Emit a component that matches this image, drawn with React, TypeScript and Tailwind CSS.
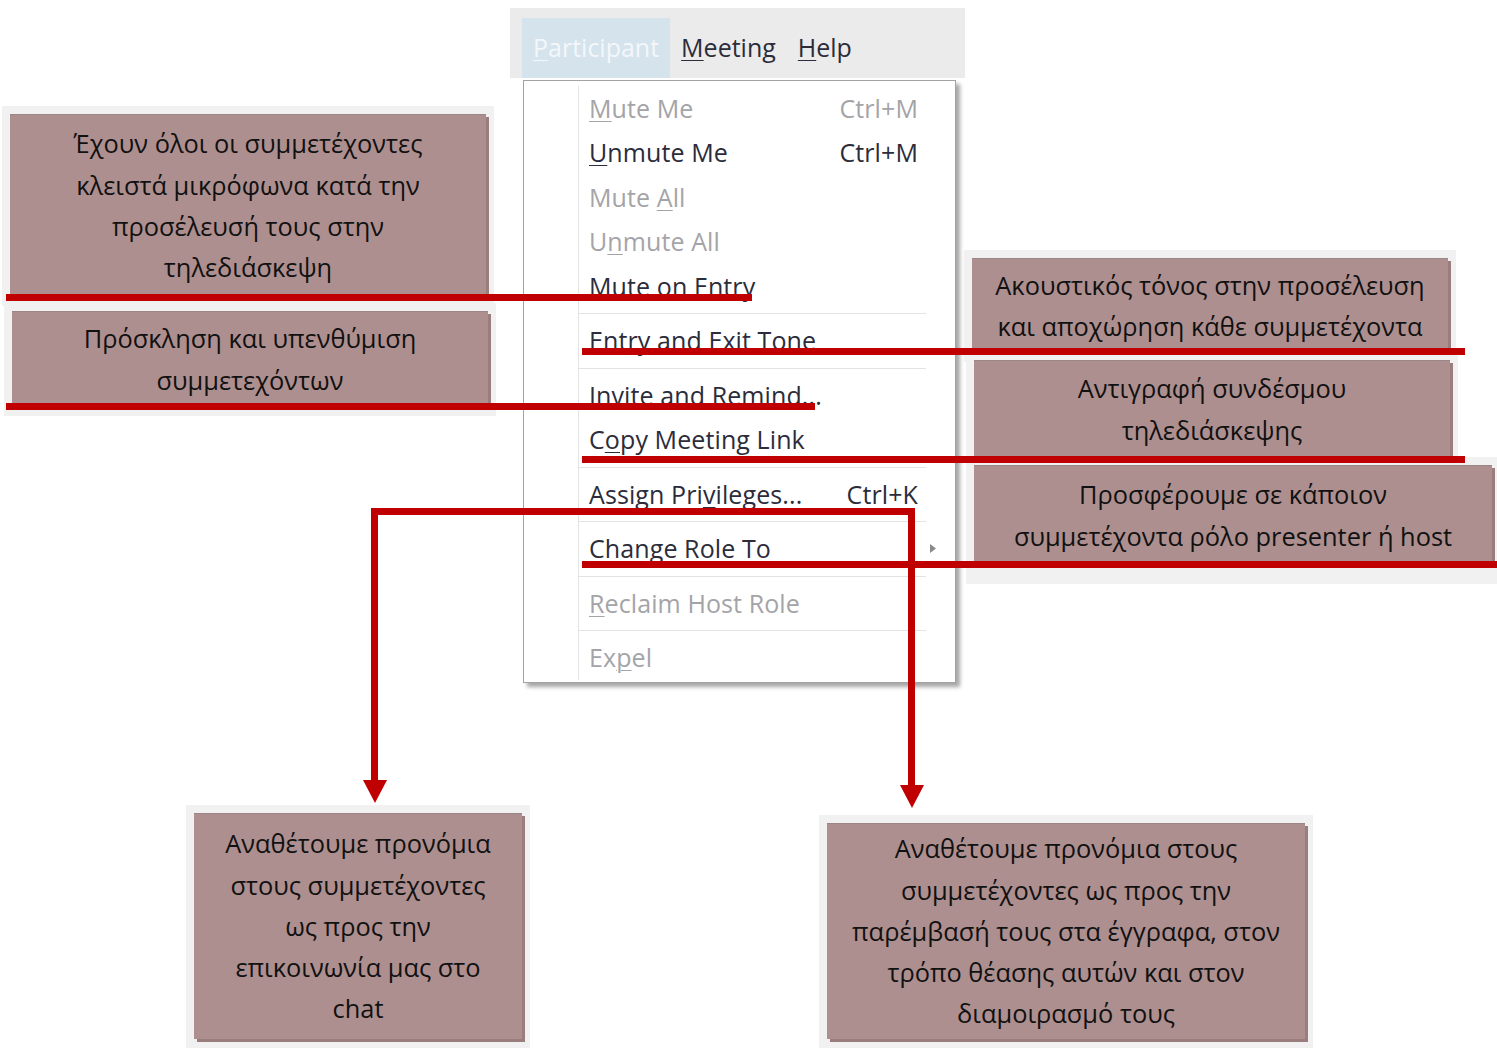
import type { ReactNode } from 'react';

type Item = {
  label: ReactNode;
  shortcut?: string;
  disabled?: boolean;
  submenu?: boolean;
};

const u = (c: string) => <span className="underline underline-offset-[3px] decoration-1">{c}</span>;

// menu groups, a separator between each
const groups: Item[][] = [
  [
    { label: <>{u('M')}ute Me</>, shortcut: 'Ctrl+M', disabled: true },
    { label: <>{u('U')}nmute Me</>, shortcut: 'Ctrl+M' },
    { label: <>Mute {u('A')}ll</>, disabled: true },
    { label: <>U{u('n')}mute All</>, disabled: true },
    { label: <>Mute on Entry</> },
  ],
  [{ label: <>Entry and Exit Tone</> }],
  [{ label: <>Invite and Remind...</> }, { label: <>C{u('o')}py Meeting Link</> }],
  [{ label: <>Assign Pri{u('v')}ileges...</>, shortcut: 'Ctrl+K' }],
  [{ label: <>{u('C')}hange Role To</>, submenu: true }],
  [{ label: <>{u('R')}eclaim Host Role</>, disabled: true }],
  [{ label: <>Ex{u('p')}el</>, disabled: true }],
];

function MenuRow({ item }: { item: Item }) {
  return (
    <div
      className={`flex h-[44.5px] items-center pl-[10px] ${item.disabled ? 'text-[#a4a4a8]' : 'text-[#2c2c3a]'}`}
    >
      <span className="flex-1 whitespace-nowrap">{item.label}</span>
      {item.shortcut && <span className="whitespace-nowrap">{item.shortcut}</span>}
      <span className="flex w-[37px] items-center pl-[12px]">
        {item.submenu && (
          <svg width="7" height="9" viewBox="0 0 7 9">
            <polygon points="0,0 6,4.5 0,9" fill="#8a8a8a" />
          </svg>
        )}
      </span>
    </div>
  );
}

function Menu() {
  return (
    <>
      <div className="absolute left-[510px] top-[8px] flex h-[70px] w-[455px] items-end bg-[#ebebeb] pl-[12px] text-[25px]">
        <div className="flex h-[60px] items-center bg-[#d5e3ec] px-[11px] text-[#f4f7fa]">{u('P')}articipant</div>
        <div className="flex h-[60px] items-center px-[11px] text-[#2c2c3a]">{u('M')}eeting</div>
        <div className="flex h-[60px] items-center px-[11px] text-[#2c2c3a]">{u('H')}elp</div>
      </div>
      <div className="absolute left-[523px] top-[80px] w-[433px] border border-[#a3a3a3] bg-white pb-[2px] pt-[5px] text-[25px] tracking-[0.1px] shadow-[4px_4px_4px_rgba(0,0,0,0.35)]">
        <div className="ml-[54px] border-l border-[#e3e3e3]">
          {groups.map((g, gi) => (
            <div key={gi}>
              {gi > 0 && (
                <div className="flex h-[10px] items-center pr-[29px]">
                  <div className="h-px w-full bg-[#e3e3e3]" />
                </div>
              )}
              {g.map((it, i) => (
                <MenuRow key={i} item={it} />
              ))}
            </div>
          ))}
        </div>
      </div>
    </>
  );
}

function Callout({ pos, size, lines, pb = 'pb-[9px]' }: { pos: string; size: string; lines: string[]; pb?: string }) {
  return (
    <div className={`absolute bg-[#f1f1f1] pl-[8px] pr-[8px] pt-[8px] ${pb} ${pos}`}>
      <div
        className={`flex flex-col items-center justify-center border-t border-[#9c8585] bg-[#ae8f8f] text-center text-[25.4px] leading-[41.3px] text-[#111] shadow-[3px_3px_0_0_#9a7e7e] ${size}`}
      >
        {lines.map((l, i) => (
          <div key={i} className="whitespace-nowrap">
            {l}
          </div>
        ))}
      </div>
    </div>
  );
}

// red connector lines and arrows
function Connectors() {
  const red = '#c00000';
  return (
    <svg className="pointer-events-none absolute left-0 top-0" width="1497" height="1050">
      <rect x="6" y="294" width="746" height="7" fill={red} />
      <rect x="6" y="403" width="809" height="7" fill={red} />
      <rect x="582" y="348" width="883" height="7" fill={red} />
      <rect x="582" y="456" width="883" height="7" fill={red} />
      <rect x="582" y="561" width="915" height="7" fill={red} />
      <rect x="371" y="508" width="544" height="7" fill={red} />
      <rect x="371" y="508" width="7" height="276" fill={red} />
      <polygon points="363,780 387,780 375,803" fill={red} />
      <rect x="908" y="508" width="7" height="280" fill={red} />
      <polygon points="900,785 924,785 912,808" fill={red} />
    </svg>
  );
}

export default function App() {
  return (
    <div className="relative h-[1050px] w-[1497px] overflow-hidden bg-white font-['Open_Sans','Noto_Sans',sans-serif]">
      <Menu />

      <Callout
        pos="left-[2px] top-[106px]"
        size="w-[476px] h-[183px]"
        lines={['Έχουν όλοι οι συμμετέχοντες', 'κλειστά μικρόφωνα κατά την', 'προσέλευσή τους στην', 'τηλεδιάσκεψη']}
      />
      <Callout
        pos="left-[4px] top-[303px]"
        size="w-[476px] h-[96px]"
        lines={['Πρόσκληση και υπενθύμιση', 'συμμετεχόντων']}
      />
      <Callout
        pos="left-[964px] top-[250px]"
        size="w-[476px] h-[95px]"
        lines={['Ακουστικός τόνος στην προσέλευση', 'και αποχώρηση κάθε συμμετέχοντα']}
      />
      <Callout
        pos="left-[966px] top-[352px]"
        size="w-[476px] h-[98px]"
        lines={['Αντιγραφή συνδέσμου', 'τηλεδιάσκεψης']}
      />
      <Callout
        pos="left-[966px] top-[457px]"
        size="w-[518px] h-[100px]"
        pb="pb-[19px]"
        lines={['Προσφέρουμε σε κάποιον', 'συμμετέχοντα ρόλο presenter ή host']}
      />
      <Callout
        pos="left-[186px] top-[805px]"
        size="w-[328px] h-[226px]"
        lines={['Αναθέτουμε προνόμια', 'στους συμμετέχοντες', 'ως προς την', 'επικοινωνία μας στο', 'chat']}
      />
      <Callout
        pos="left-[819px] top-[815px]"
        size="w-[478px] h-[216px]"
        lines={[
          'Αναθέτουμε προνόμια στους',
          'συμμετέχοντες ως προς την',
          'παρέμβασή τους στα έγγραφα, στον',
          'τρόπο θέασης αυτών και στον',
          'διαμοιρασμό τους',
        ]}
      />

      <Connectors />
    </div>
  );
}
